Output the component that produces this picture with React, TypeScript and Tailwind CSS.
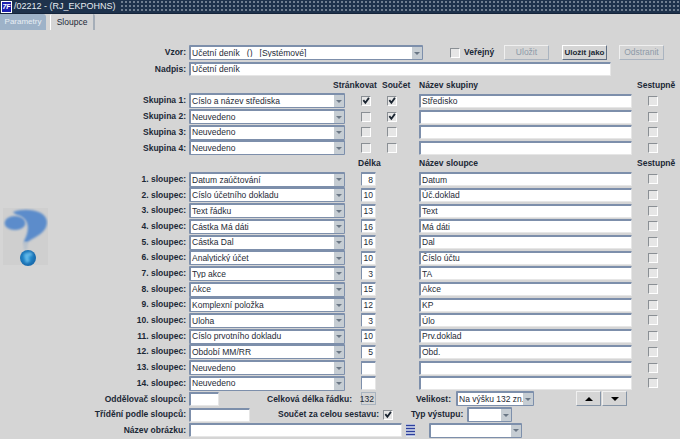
import React from "react";

function Check({ on = false }: { on?: boolean }) {
  return (
    <span className="flex h-[10px] w-[10px] items-center justify-center border-t border-l border-t-[#8a8f94] border-l-[#8a8f94] border-r border-b border-r-white border-b-white bg-[#e6e6e6]">
      {on && (
        <svg width="8" height="8" viewBox="0 0 9 9">
          <path d="M1.5 3.5 L3.8 6.5 L7.8 1" stroke="#1a2430" strokeWidth="2" fill="none" />
        </svg>
      )}
    </span>
  );
}

function Field({ w, value = "", right = false, thin = false }: { w: string; value?: string; right?: boolean; thin?: boolean }) {
  return (
    <div
      className={`flex h-[14px] items-center overflow-hidden whitespace-pre rounded-[1px] border-t-2 ${thin ? "border-l" : "border-l-2"} border-t-[#7d8fab] border-l-[#7d8fab] border-r border-b border-r-[#e6e6e6] border-b-[#e6e6e6] bg-white px-[1px] text-[8.5px] leading-none text-[#1e2a36] ${right ? "justify-end pr-[2px]" : ""} ${w}`}
    >
      {value}
    </div>
  );
}

function Select({ w, value = "" }: { w: string; value?: string }) {
  return (
    <div className={`flex h-[15px] items-center rounded-[1px] border border-t-2 border-l-2 border-[#7d8fab] bg-white text-[8.5px] leading-none text-[#1e2a36] ${w}`}>
      <span className="flex-1 overflow-hidden whitespace-pre pl-[1px]">{value}</span>
      <span className="flex h-full w-[10px] items-center justify-center bg-[#c6cdd3]">
        <span className="h-0 w-0 border-x-[3px] border-t-[3px] border-x-transparent border-t-[#6a7785]" />
      </span>
    </div>
  );
}

function Label({ children }: { children: React.ReactNode }) {
  return <div className="w-[186px] shrink-0 whitespace-nowrap text-right text-[8.5px] font-bold text-[#1b2836]">{children}</div>;
}

function Head({ children, cls = "" }: { children: React.ReactNode; cls?: string }) {
  return <div className={`shrink-0 whitespace-nowrap text-[8.5px] font-bold text-[#1b2836] ${cls}`}>{children}</div>;
}

function Btn({ children, on = false }: { children: React.ReactNode; on?: boolean }) {
  return (
    <div
      className={`flex h-[15px] w-[45px] items-center justify-center border ${on ? "border-t-white border-l-white border-r-[#5f6f84] border-b-[#5f6f84] text-[8px] font-bold text-[#1b2836]" : "border-t-[#f0f0f0] border-l-[#f0f0f0] border-r-[#aab4c0] border-b-[#aab4c0] text-[8.5px] text-[#8d9aa8]"}`}
    >
      {children}
    </div>
  );
}

const groups = [
  ["Číslo a název střediska", true, true, "Středisko"],
  ["Neuvedeno", false, true, ""],
  ["Neuvedeno", false, false, ""],
  ["Neuvedeno", false, false, ""],
] as const;

const cols = [
  ["Datum zaúčtování", "8", "Datum"],
  ["Číslo účetního dokladu", "10", "Úč.doklad"],
  ["Text řádku", "13", "Text"],
  ["Částka Má dáti", "16", "Má dáti"],
  ["Částka Dal", "16", "Dal"],
  ["Analytický účet", "10", "Číslo účtu"],
  ["Typ akce", "3", "TA"],
  ["Akce", "15", "Akce"],
  ["Komplexní položka", "12", "KP"],
  ["Úloha", "3", "Úlo"],
  ["Číslo prvotního dokladu", "10", "Prv.doklad"],
  ["Období MM/RR", "5", "Obd."],
  ["Neuvedeno", "", ""],
  ["Neuvedeno", "", ""],
];

const row = "flex h-[15.7px] items-center";
const arrowBtn = "flex h-[15px] w-[25px] items-center justify-center border border-t-[#f0f0f0] border-l-[#f0f0f0] border-r-[#8594a6] border-b-[#8594a6]";

export default function App() {
  return (
    <div className="h-[439px] w-[680px] overflow-hidden bg-[#d5d5d5] font-['Liberation_Sans',Arial,sans-serif]">
      <div className="flex h-[14px] items-center border-b border-b-[#14243a] bg-[#1e324c]">
        <div className="ml-[1px] flex h-[12px] w-[11px] items-center justify-center border border-white bg-[#1a1fb0] text-[7px] font-bold italic leading-none text-white">7F</div>
        <div className="ml-[2px] w-[106px] shrink-0 whitespace-nowrap text-[9px] leading-none text-[#e6ebf0]">/02212 - (RJ_EKPOHNS)</div>
        <div className="h-full flex-1 bg-[radial-gradient(#6f7e90_0.8px,transparent_0.9px)] bg-[length:4px_4px]" />
      </div>
      <div className="flex h-[16px] items-stretch">
        <div className="flex w-[46px] items-center justify-center rounded-tr-[3px] bg-[#9db2c8] text-[8px] text-[#e8eef4]">Parametry</div>
        <div className="ml-[4px] flex w-[45px] items-center justify-center rounded-t-[2px] border-l border-r-2 border-l-white border-r-[#a5aeb8] bg-[#d5d5d5] text-[8.5px] text-[#1b2836]">Sloupce</div>
      </div>
      <div className="flex">
        <div className="w-[50px] shrink-0 pl-[3px] pt-[178px]">
          <svg width="45" height="58" viewBox="0 0 45 58" className="block">
            <defs>
              <filter id="b"><feGaussianBlur stdDeviation="1" /></filter>
              <radialGradient id="g" cx="0.45" cy="0.45"><stop offset="0" stopColor="#2aa0e2" /><stop offset="1" stopColor="#1a6cae" /></radialGradient>
            </defs>
            <rect x="0" y="0" width="45" height="57" fill="#cfcfcf" />
            <path d="M10 4 C22 -1 44 2 44 14 C44 26 30 29 22 36 L21 33 C26 24 27 14 19 9 C16 7 12 7 10 4 Z" fill="#5b8ccb" filter="url(#b)" />
            <ellipse cx="12" cy="15" rx="10.5" ry="7" fill="#5b8ccb" filter="url(#b)" />
            <path d="M20 34 L25 34 L24 42 L21 42 Z" fill="#b9c2cc" filter="url(#b)" />
            <circle cx="25" cy="50" r="8" fill="url(#g)" />
            <path d="M21 46 L28 44 L30 47 L25 49 L27 53 L23 55 Z" fill="#7cc6ee" opacity="0.7" filter="url(#b)" />
          </svg>
        </div>
        <div className="-ml-[50px] flex flex-1 flex-col pt-[14px]">
          <div className="flex h-[17px] items-center">
            <Label>Vzor:</Label>
            <div className="ml-[3px]"><Select w="w-[234px]" value="Účetní deník   ()   [Systémové]" /></div>
            <div className="ml-[27px]"><Check /></div>
            <Head cls="ml-[4px] w-[40px]">Veřejný</Head>
            <Btn>Uložit</Btn>
            <div className="ml-[13px]"><Btn on>Uložit jako</Btn></div>
            <div className="ml-[12px]"><Btn>Odstranit</Btn></div>
          </div>
          <div className="flex h-[16px] items-center">
            <Label>Nadpis:</Label>
            <div className="ml-[3px]"><Field w="w-[422px]" value="Účetní deník" /></div>
          </div>
          <div className="flex h-[16px] items-center">
            <Head cls="ml-[333px] w-[43px]">Stránkovat</Head>
            <Head cls="ml-[6px] w-[28px]">Součet</Head>
            <Head cls="ml-[9px] w-[218px]">Název skupiny</Head>
            <Head>Sestupně</Head>
          </div>
          {groups.map((g, i) => (
            <div className={row} key={i}>
              <Label>Skupina {i + 1}:</Label>
              <div className="ml-[3px]"><Select w="w-[156px]" value={g[0]} /></div>
              <div className="ml-[16px]"><Check on={g[1]} /></div>
              <div className="ml-[16px]"><Check on={g[2]} /></div>
              <div className="ml-[22px]"><Field w="w-[213px]" value={g[3]} /></div>
              <div className="ml-[16px]"><Check /></div>
            </div>
          ))}
          <div className={row}>
            <Head cls="ml-[358px] w-[61px]">Délka</Head>
            <Head cls="w-[218px]">Název sloupce</Head>
            <Head>Sestupně</Head>
          </div>
          {cols.map((c, i) => (
            <div className={row} key={i}>
              <Label>{i + 1}. sloupec:</Label>
              <div className="ml-[3px]"><Select w="w-[156px]" value={c[0]} /></div>
              <div className="ml-[16px]"><Field thin w="w-[15px]" value={c[1]} right /></div>
              <div className="ml-[43px]"><Field w="w-[213px]" value={c[2]} /></div>
              <div className="ml-[16px]"><Check /></div>
            </div>
          ))}
          <div className={row}>
            <Label>Oddělovač sloupců:</Label>
            <div className="ml-[3px]"><Field w="w-[30px]" /></div>
            <Head cls="ml-[48px] w-[94px]">Celková délka řádku:</Head>
            <div className="flex h-[13px] w-[15px] items-center justify-end border border-[#a9b4c0] pr-[1px] text-[8.5px] text-[#1e2a36]">132</div>
            <Head cls="ml-[40px] w-[40px]">Velikost:</Head>
            <Select w="w-[78px]" value="Na výšku 132 zn." />
            <div className="ml-[42px] flex gap-[1px]">
              <div className={arrowBtn}><span className="h-0 w-0 border-x-[4px] border-b-[4px] border-x-transparent border-b-black" /></div>
              <div className={arrowBtn}><span className="h-0 w-0 border-x-[4px] border-t-[4px] border-x-transparent border-t-black" /></div>
            </div>
          </div>
          <div className={row}>
            <Label>Třídění podle sloupců:</Label>
            <div className="ml-[3px]"><Field w="w-[61px]" /></div>
            <Head cls="ml-[28px] w-[105px]">Součet za celou sestavu:</Head>
            <Check on />
            <Head cls="ml-[18px] w-[56px]">Typ výstupu:</Head>
            <Select w="w-[45px]" />
          </div>
          <div className={row}>
            <Label>Název obrázku:</Label>
            <div className="ml-[3px]"><Field w="w-[213px]" /></div>
            <div className="ml-[4px]">
              <svg width="9" height="13" viewBox="0 0 9 13" className="block">
                <rect x="0" y="0" width="9" height="13" fill="#dfe6f0" />
                <path d="M0 1.5H9M0 4.5H9M0 7.5H9M0 10.5H9" stroke="#2d3f9c" strokeWidth="1.6" />
              </svg>
            </div>
            <div className="ml-[14px]"><Select w="w-[93px]" /></div>
          </div>
        </div>
      </div>
    </div>
  );
}
